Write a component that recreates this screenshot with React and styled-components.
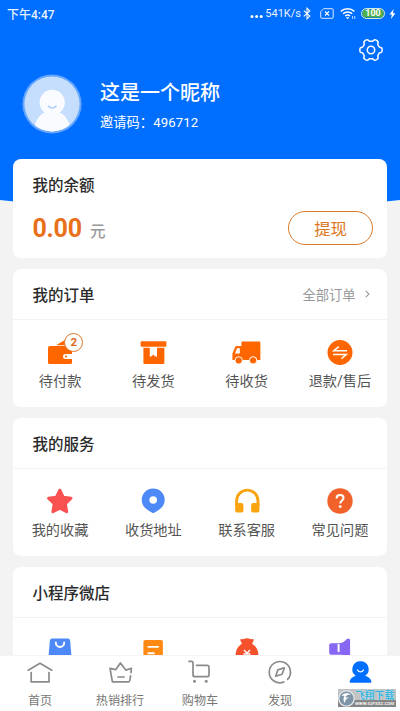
import styled, { createGlobalStyle } from "styled-components"

const orders = [
  { id: "pay", label: "待付款", icon: <WalletIcon />, badge: 2 },
  { id: "send", label: "待发货", icon: <BoxIcon /> },
  { id: "receive", label: "待收货", icon: <TruckIcon /> },
  { id: "refund", label: "退款/售后", icon: <RefundIcon /> },
]

const services = [
  { id: "star", label: "我的收藏", icon: <StarIcon /> },
  { id: "address", label: "收货地址", icon: <PinIcon /> },
  { id: "support", label: "联系客服", icon: <HeadphoneIcon /> },
  { id: "faq", label: "常见问题", icon: <QuestionIcon /> },
]

const shop = [
  { id: "bag", icon: <BagIcon /> },
  { id: "note", icon: <NoteIcon /> },
  { id: "money", icon: <MoneyIcon /> },
  { id: "horn", icon: <HornIcon /> },
]

const tabs = [
  { id: "home", label: "首页", icon: <HomeIcon /> },
  { id: "hot", label: "热销排行", icon: <CrownIcon /> },
  { id: "cart", label: "购物车", icon: <CartIcon /> },
  { id: "find", label: "发现", icon: <CompassIcon /> },
  { id: "me", icon: <UserIcon /> },
]

const App = () => {
  return (
    <>
      <GlobalStyle />
      <Page>
        <Content>
          <Hero>
            <StatusBar>
              <span>下午4:47</span>
              <StatusRight />
            </StatusBar>
            <Settings>
              <GearIcon />
            </Settings>
            <Profile>
              <AvatarIcon />
              <div>
                <h1>这是一个昵称</h1>
                <p>邀请码：496712</p>
              </div>
            </Profile>
          </Hero>
          <Cards>
            <Balance>
              <h2>我的余额</h2>
              <div className="row">
                <p>
                  <strong>0.00</strong>元
                </p>
                <button type="button">提现</button>
              </div>
            </Balance>
            <MenuCard title="我的订单" more="全部订单" items={orders} />
            <MenuCard title="我的服务" items={services} />
            <MenuCard title="小程序微店" items={shop} />
          </Cards>
        </Content>
        <TabBar>
          {tabs.map((tab) => (
            <Tab key={tab.id}>
              {tab.icon}
              {tab.label && <span>{tab.label}</span>}
            </Tab>
          ))}
          <Watermark>
            <WatermarkLogo />
            <div>
              <b>飞翔下载</b>
              <small>WWW.52FXXZ.COM</small>
            </div>
          </Watermark>
        </TabBar>
      </Page>
    </>
  )
}

const MenuCard = ({ title, more, items }) => (
  <Card>
    <CardHead>
      <h2>{title}</h2>
      {more && (
        <More>
          {more}
          <svg width="5" height="8" viewBox="0 0 5 8">
            <path d="M.8.8 4 4 .8 7.2" fill="none" stroke="#999" strokeWidth="1.1" />
          </svg>
        </More>
      )}
    </CardHead>
    <Grid>
      {items.map((item) => (
        <Item key={item.id}>
          {item.icon}
          {item.badge && <Badge>{item.badge}</Badge>}
          {item.label && <span>{item.label}</span>}
        </Item>
      ))}
    </Grid>
  </Card>
)

/* status bar and header drawings */

function StatusRight() {
  return (
    <StatusIcons>
      <svg className="dots" width="13" height="12" viewBox="0 0 13 12">
        <g fill="#fff">
          <circle cx="2" cy="8.6" r="1.5" />
          <circle cx="6.6" cy="8.6" r="1.5" />
          <circle cx="11.2" cy="8.6" r="1.5" />
        </g>
      </svg>
      <span>541K/s</span>
      <svg className="bt" width="8" height="13" viewBox="0 0 8 13">
        <path d="M.8 3.6 6.8 9 4 11.8V1.2L6.8 4 .8 9.4" fill="none" stroke="#fff" strokeWidth="1.1" />
      </svg>
      <svg className="sim" width="14" height="11" viewBox="0 0 14 11">
        <path d="M3.6.7H12a1.2 1.2 0 0 1 1.2 1.2v7.2A1.2 1.2 0 0 1 12 10.3H1.9A1.2 1.2 0 0 1 .7 9.1V3.6z" fill="none" stroke="#d9e8ff" strokeWidth="1" />
        <path d="m5 3.5 4 4m0-4-4 4" stroke="#fff" strokeWidth="1.1" />
      </svg>
      <svg className="wifi" width="17" height="13" viewBox="0 0 17 13">
        <g fill="none" stroke="#fff" strokeWidth="1.5">
          <path d="M.8 4.4a10 10 0 0 1 13.6 0" />
          <path d="M3 6.8a7 7 0 0 1 9.2 0" />
          <path d="M5.2 9a3.8 3.8 0 0 1 4.8 0" />
        </g>
        <path d="m7.6 12.2-1.8-2h3.6z" fill="#fff" />
        <path d="M12.6 9v3M14.8 9v3" stroke="#b9d5ff" strokeWidth="1" />
      </svg>
      <Battery>100</Battery>
      <svg className="bolt" width="7" height="10" viewBox="0 0 7 10">
        <path d="M4.6 0 .4 5.6h2.4L2 10l4.4-5.8H4z" fill="#fff" />
      </svg>
    </StatusIcons>
  )
}

function GearIcon() {
  // six flat lobes around the hub
  const points = Array.from({ length: 120 }, (_, i) => {
    const a = (i / 120) * Math.PI * 2
    const r = 9.9 + 1.25 * Math.tanh(2.2 * Math.cos(6 * a))
    return `${(13 + r * Math.cos(a)).toFixed(2)},${(13 + r * Math.sin(a)).toFixed(2)}`
  }).join(" ")
  return (
    <svg width="26" height="26" viewBox="0 0 26 26" fill="none" stroke="#fff" strokeWidth="1.5" strokeLinejoin="round">
      <polygon points={points} />
      <circle cx="13" cy="13" r="3.7" />
    </svg>
  )
}

function AvatarIcon() {
  return (
    <svg width="60" height="60" viewBox="0 0 60 60">
      <clipPath id="avatar">
        <circle cx="30" cy="30" r="27.4" />
      </clipPath>
      <circle cx="30" cy="30" r="29.6" fill="#65a5fd" />
      <circle cx="30" cy="30" r="27.6" fill="#c5defe" />
      <g clipPath="url(#avatar)" fill="#f9fbff">
        <circle cx="30.2" cy="28.4" r="12.6" />
        <path d="M12 58c0-8 4-16.6 10.500-19.400h15.200C44.500 41.400 48.500 50 48.500 58z" />
      </g>
      <path d="M26.200 31.600c2 3.200 6.200 3.200 8.200 0" fill="none" stroke="#a9cbfa" strokeWidth="1.600" />
    </svg>
  )
}

/* menu icons */

function WalletIcon() {
  return (
    <Icon viewBox="0 0 40 34">
      <path d="M16 13.200 25 8v5.200z" fill="#f60" />
      <path d="M10 14h20a2 2 0 0 1 2 2v6h-6.500a2.300 2.300 0 0 0 0 5H32v3.500a1.500 1.500 0 0 1-1.500 1.500h-21A1.500 1.500 0 0 1 8 30.500V16a2 2 0 0 1 2-2z" fill="#f60" />
      <circle cx="26" cy="24.500" r="1.100" fill="#f60" />
    </Icon>
  )
}

function BoxIcon() {
  return (
    <Icon viewBox="0 0 40 34">
      <rect x="7.600" y="9.300" width="25.800" height="5.400" rx="1" fill="#f60" />
      <path d="M10.400 15.700h6.400V25l2-1.100 1.500-1.500 1.500 1.500L24 25v-9.300h7.400V31a1 1 0 0 1-1 1h-19a1 1 0 0 1-1-1z" fill="#f60" />
    </Icon>
  )
}

function TruckIcon() {
  return (
    <Icon viewBox="0 0 40 34">
      <path d="M15.400 9.500h17a1 1 0 0 1 1 1V28H5.400v-6.500l2.600-6.300c.3-.8.800-1.200 1.600-1.200h4.800v-3.500a1 1 0 0 1 1-1z" fill="#f60" />
      <path d="M10 16.200h2.800v5.400H8z" fill="#fff" />
      <g fill="#f60" stroke="#fff" strokeWidth="1">
        <circle cx="11.700" cy="28.400" r="3.700" />
        <circle cx="26.100" cy="28.400" r="3.700" />
      </g>
    </Icon>
  )
}

function RefundIcon() {
  return (
    <Icon viewBox="0 0 40 34">
      <circle cx="20" cy="20.500" r="12.500" fill="#f60" />
      <path d="M27 18.800H13.800l5-4.200M13 22.400h13.300l-4.900 4.300" fill="none" stroke="#fff" strokeWidth="1.500" />
    </Icon>
  )
}

function StarIcon() {
  return (
    <Icon viewBox="0 0 40 34">
      <path d="m19.800 9.200 3.400 7 7.800 1.100-5.600 5.500 1.300 7.900-6.900-3.600-6.900 3.600 1.300-7.900-5.600-5.500 7.800-1.100z" fill="#fa5151" stroke="#fa5151" strokeWidth="3" strokeLinejoin="round" />
    </Icon>
  )
}

function PinIcon() {
  return (
    <Icon viewBox="0 0 40 34">
      <path d="M20.200 7.400a11.500 11.500 0 0 1 11.500 11.400c0 4.500-2.200 7.400-5 9.500-2 1.500-4 2.500-5.500 3.500q-1 .6-2 0c-1.500-1-3.500-2-5.500-3.500-2.800-2.100-5-5-5-9.500A11.500 11.500 0 0 1 20.200 7.400z" fill="#4e8af7" />
      <circle cx="20.200" cy="19" r="3.800" fill="#fff" />
    </Icon>
  )
}

function HeadphoneIcon() {
  return (
    <Icon viewBox="0 0 40 34">
      <path d="M9.600 25v-5.200a10.700 10.700 0 0 1 21.400 0V25" fill="none" stroke="#f9a40f" strokeWidth="2.900" />
      <path d="M8.150 22h6.300a2 2 0 0 1 2 2v5.400a2 2 0 0 1-2 2h-4.300a2 2 0 0 1-2-2zM32.450 22h-6.300a2 2 0 0 0-2 2v5.400a2 2 0 0 0 2 2h4.300a2 2 0 0 0 2-2z" fill="#f9a40f" />
    </Icon>
  )
}

function QuestionIcon() {
  return (
    <Icon viewBox="0 0 40 34">
      <circle cx="20" cy="20" r="12.700" fill="#f1622b" />
      <path d="M16.600 17.400c0-4.600 6.900-4.200 6.900-.4 0 2.400-3.300 2.700-3.300 5.600" fill="none" stroke="#fff" strokeWidth="2.100" />
      <circle cx="20.200" cy="25.600" r="1.400" fill="#fff" />
    </Icon>
  )
}

function BagIcon() {
  return (
    <Icon viewBox="0 0 40 34">
      <path d="M12.200 8.500h15.600q2 0 2.300 2L32 32H8l1.900-21.500q.3-2 2.300-2z" fill="#4e8af7" />
      <path d="M15.800 12.500a4.200 4.500 0 0 0 8.400 0" fill="none" stroke="#fff" strokeWidth="1.900" strokeLinecap="round" />
    </Icon>
  )
}

function NoteIcon() {
  return (
    <Icon viewBox="0 0 40 34">
      <rect x="10.400" y="10" width="19.500" height="22" rx="1.800" fill="#ff8a13" />
      <path d="M14.600 16.900h11.200M14.600 23.300h7" stroke="#fff" strokeWidth="1.900" />
    </Icon>
  )
}

function MoneyIcon() {
  return (
    <Icon viewBox="0 0 40 34">
      <path d="M13.300 10.200q-.2-1.400 1.300-1.200 1.700.5 2.600-.2 2.800-1.200 5.600 0 1 .7 2.600.2 1.500-.2 1.300 1.200l-1.600 3.500c4.200 2.700 6 6 6.300 11.300H8.600c.3-5.300 2.100-8.600 6.300-11.300z" fill="#f4512c" />
      <path d="m17 20 3 3.200 3-3.200M16.500 24h7" fill="none" stroke="#fff" strokeWidth="1.400" />
    </Icon>
  )
}

function HornIcon() {
  return (
    <Icon viewBox="0 0 40 34">
      <path d="M11.500 13.300H18c4 0 6.500-1.500 8.800-4.300q3.300-1.500 3.300 1.500V28c-3-2-6-3-9-3.200h-9.600a2 2 0 0 1-2.300-2v-7.300a2 2 0 0 1 2.300-2.200z" fill="#8767f3" />
      <path d="M18.600 14.800v6.500" stroke="#fff" strokeWidth="2" strokeLinecap="round" />
    </Icon>
  )
}

/* tab icons */

function HomeIcon() {
  return (
    <TabIcon>
      <path d="M4.200 12.200 16 5.300l11.800 6.900" />
      <path d="M7.200 14.500v9.400h17.800v-9.400" />
    </TabIcon>
  )
}

function CrownIcon() {
  return (
    <TabIcon>
      <path d="m27 14.600.4-4.300-5.600 1.800L16.400 5l-4.700 6.700-5.700-1.400 2.400 13.500h16.200q1 0 1.300-2l.7-4" />
      <path d="M14 19h6" />
    </TabIcon>
  )
}

function CartIcon() {
  return (
    <TabIcon>
      <path d="M5 3.400h2.500q1.500 0 1.500 1.500v11.800q0 2 2 2h12q2 0 2-2V9.200q0-1.800-2-1.800H12.500" />
      <circle cx="10.500" cy="23.300" r="1.500" fill="#8b8b8b" stroke="none" />
      <circle cx="22.200" cy="23.300" r="1.500" fill="#8b8b8b" stroke="none" />
    </TabIcon>
  )
}

function CompassIcon() {
  return (
    <TabIcon>
      <path d="M19.800 24a10.600 10.600 0 1 1 3.800-2.600" />
      <path d="m20.400 9.800-6.600 2.100-2.100 6.400 6.400-2.100z" />
    </TabIcon>
  )
}

function UserIcon() {
  return (
    <TabIcon>
      <path d="M16.500 3.200a8 8 0 0 1 4.700 14.600c3.500 1 5.500 3 6.200 5.700q.2 1.200-1 1.200H6.600q-1.200 0-1-1.200c.7-2.700 2.700-4.700 6.200-5.700A8 8 0 0 1 16.500 3.200z" fill="#006eff" stroke="none" />
      <path d="M13.500 12c1.500 2.500 4.500 2.500 6 0" stroke="#fff" strokeWidth="1.400" />
    </TabIcon>
  )
}

function WatermarkLogo() {
  return (
    <svg width="17" height="17" viewBox="0 0 17 17">
      <circle cx="8.500" cy="8.500" r="7.700" fill="#7e95a8" stroke="#dfe5ea" strokeWidth="1.300" />
      <path d="M3.500 5.500c3-3 7-2.500 9.500-1-3-.2-5 .8-5.500 3h4c-2 .8-4 1-4.500 5.500-2-2-2-5-.5-7z" fill="#fff" />
    </svg>
  )
}

const GlobalStyle = createGlobalStyle`
* {
  box-sizing: border-box;
  margin: 0;
  padding: 0;
}
body {
  font-family: Roboto, "Noto Sans CJK SC", sans-serif;
  color: #333;
  background: #f3f3f3;
}
svg {
  display: block;
  flex: none;
}
h2 {
  font-size: 15.5px;
  line-height: 22px;
  font-weight: 500;
  color: #2b2b2b;
}
`

const Page = styled.div`
  width: 400px;
  height: 711px;
  display: flex;
  flex-direction: column;
  overflow: hidden;
`

const Content = styled.div`
  flex: 1;
  min-height: 0;
  overflow: hidden;
`

const Hero = styled.header`
  height: 210px;
  background: #006eff;
  color: #fff;
  clip-path: ellipse(164% 100% at 50% 0);
`

const StatusBar = styled.div`
  height: 27px;
  padding: 0 4px 0 7px;
  display: flex;
  justify-content: space-between;
  align-items: center;
  font-size: 12px;
  font-weight: 500;
  color: #e9f2ff;
`

const StatusIcons = styled.div`
  display: flex;
  align-items: center;
  font-size: 11px;
  font-weight: 400;
  .dots {
    margin-right: 2px;
  }
  .bt {
    margin-left: 2px;
  }
  .sim {
    margin-left: 9px;
  }
  .wifi {
    margin-left: 6px;
  }
  .bolt {
    margin-left: 4px;
  }
`

const Battery = styled.span`
  width: 24px;
  height: 11px;
  margin-left: 4px;
  border: 1px solid #d5ecdc;
  border-radius: 6px;
  background: #4fb04a;
  box-shadow: inset 0 0 0 0.5px #006eff;
  color: #fff;
  font-size: 9px;
  font-weight: 700;
  line-height: 9px;
  text-align: center;
`

const Settings = styled.div`
  display: flex;
  justify-content: flex-end;
  padding: 10px 16px 0 0;
`

const Profile = styled.div`
  display: flex;
  align-items: center;
  gap: 18px;
  padding: 11px 0 0 22px;
  h1 {
    margin-top: 4px;
    font-size: 20px;
    font-weight: 500;
    line-height: 28px;
  }
  p {
    margin-top: 6px;
    font-size: 13.2px;
    line-height: 20px;
    letter-spacing: 0.1px;
  }
`

const Cards = styled.main`
  position: relative;
  margin-top: -51px;
  padding: 0 13.4px;
  display: grid;
  gap: 11px;
`

const Card = styled.section`
  height: 138px;
  background: #fff;
  border-radius: 8px;
`

const Balance = styled(Card)`
  height: 99px;
  padding: 16px 13.5px 0 19px;
  .row {
    display: flex;
    justify-content: space-between;
    align-items: center;
    margin-top: 14px;
  }
  p {
    font-size: 15.5px;
    font-weight: 500;
    color: #999;
  }
  strong {
    margin-right: 8px;
    font-size: 25px;
    font-weight: 700;
    letter-spacing: -0.2px;
    color: #e9701a;
  }
  button {
    width: 85px;
    height: 34px;
    border: 1.5px solid #dd7a2a;
    border-radius: 17px;
    background: #fff;
    color: #dd7722;
    font-family: inherit;
    font-size: 16.4px;
  }
`

const CardHead = styled.div`
  height: 51px;
  padding: 0 15px 0 19px;
  display: flex;
  justify-content: space-between;
  align-items: center;
  border-bottom: 1px solid #f3f3f3;
  h2 {
    padding-top: 3px;
  }
`

const More = styled.span`
  display: flex;
  align-items: center;
  gap: 9px;
  padding-right: 2px;
  font-size: 13.3px;
  color: #999;
`

const Grid = styled.div`
  display: grid;
  grid-template-columns: repeat(4, 1fr);
  padding-top: 12px;
`

const Item = styled.div`
  position: relative;
  display: flex;
  flex-direction: column;
  align-items: center;
  span {
    margin-top: 5px;
    font-size: 14.2px;
    line-height: 20px;
    color: #555;
    white-space: nowrap;
  }
`

const Icon = styled.svg`
  width: 40px;
  height: 34px;
`

const Badge = styled.i`
  position: absolute;
  top: 1px;
  left: 51px;
  width: 19px;
  height: 19px;
  border: 1.3px solid #e0762a;
  border-radius: 50%;
  background: #fff;
  color: #e0661a;
  font-size: 11.5px;
  font-style: normal;
  font-weight: 700;
  line-height: 17px;
  text-align: center;
`

const TabBar = styled.nav`
  position: relative;
  height: 56px;
  display: grid;
  grid-template-columns: repeat(5, 1fr);
  background: #fff;
  border-top: 1px solid #f5f5f5;
`

const Tab = styled.div`
  display: flex;
  flex-direction: column;
  align-items: center;
  padding-top: 2px;
  span {
    margin-top: 6px;
    font-size: 12.1px;
    line-height: 18px;
    color: #777;
  }
`

const TabIcon = styled.svg.attrs({ viewBox: "0 0 32 28" })`
  width: 32px;
  height: 28px;
  fill: none;
  stroke: #8b8b8b;
  stroke-width: 1.7;
  stroke-linecap: round;
  stroke-linejoin: round;
`

const Watermark = styled.div`
  position: absolute;
  top: 33px;
  left: 338px;
  width: 58px;
  height: 18px;
  display: flex;
  align-items: center;
  background: linear-gradient(#c3c3c3 62%, #858585 62%);
  b {
    display: block;
    font-size: 9.8px;
    line-height: 11px;
    font-weight: 700;
    color: #35b4dd;
    text-shadow: 0 0 1px #fff;
    white-space: nowrap;
  }
  small {
    display: block;
    font-size: 4.4px;
    line-height: 6px;
    font-weight: 700;
    color: #f2f2f2;
  }
`

export default App
